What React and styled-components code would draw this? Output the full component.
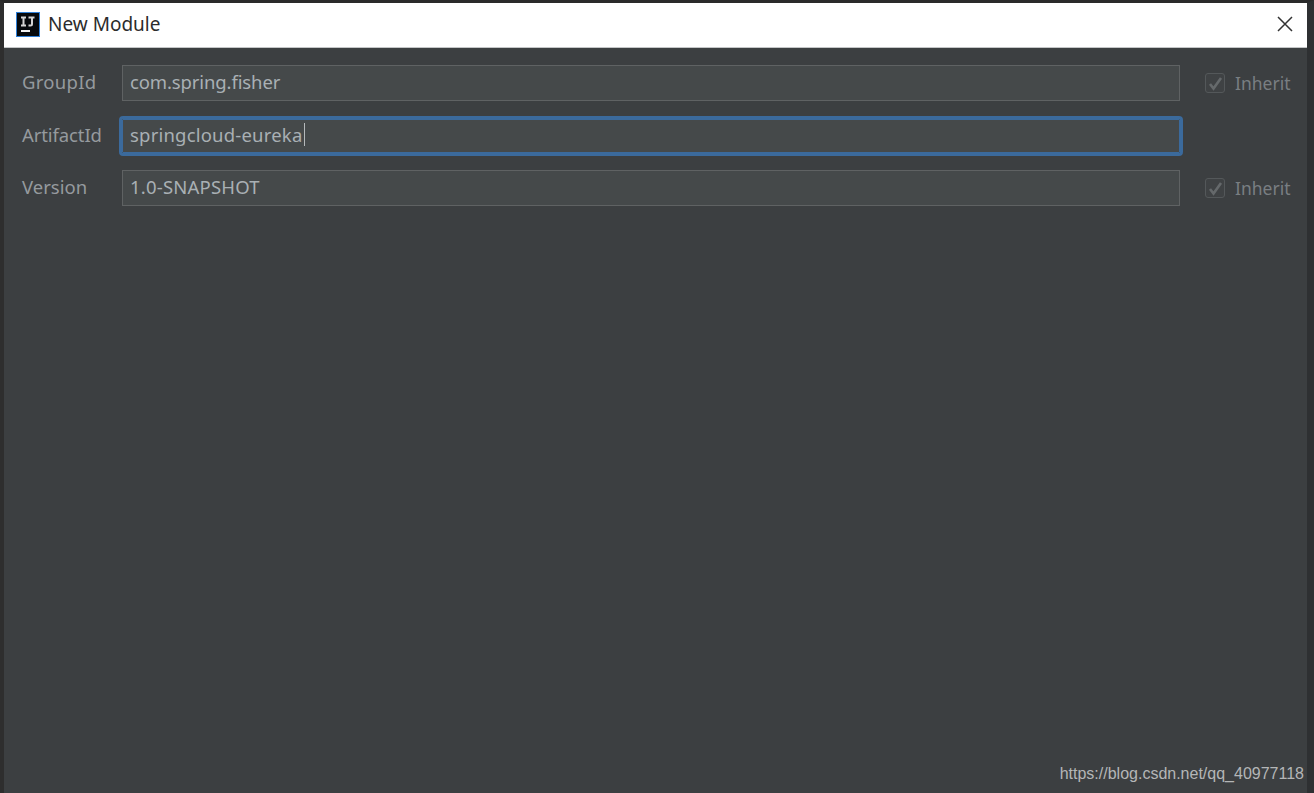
import React from 'react'
import styled, { createGlobalStyle } from 'styled-components'

const GlobalStyle = createGlobalStyle`
    html, body {
        margin: 0;
        padding: 0;
        background: #2b2b2b;
    }
    * {
        box-sizing: border-box;
    }
`

const Frame = styled.div`
    position: relative;
    width: 1314px;
    height: 793px;
    overflow: hidden;
    display: flex;
    flex-direction: column;
    background: #3c3f41;
    border-top: 3px solid #2a2a2a;
    border-left: 4px solid #2e2e2e;
    border-right: 7px solid #2e3032;
    font-family: "Noto Sans", sans-serif;
`

const TitleBar = styled.div`
    height: 45px;
    flex: none;
    display: flex;
    align-items: center;
    background: #fff;
    padding: 0 13px 2px 12px;
    border-bottom: 1px solid #c4c6c7;
`

const Title = styled.span`
    margin-left: 8px;
    flex: 1;
    font-size: 19px;
    line-height: 24px;
    color: #2c2c2c;
`

const CloseButton = styled.button`
    width: 18px;
    height: 18px;
    padding: 0;
    border: none;
    background: none;
    display: flex;
`

const Form = styled.div`
    padding: 17px 18px 0 18px;
    display: grid;
    grid-template-columns: 100px 1058px auto;
    grid-auto-rows: 36px;
    row-gap: 16.5px;
    align-items: center;
`

const Label = styled.label`
    font-size: 18.5px;
    line-height: 32px;
    padding-bottom: 2px;
    letter-spacing: ${p => p.$tracking || 0}px;
    color: #959a9e;
`

const Input = styled.div`
    height: ${p => (p.$focused ? '34px' : '36px')};
    display: flex;
    align-items: center;
    padding: 0 0 4px 7px;
    background: #45494a;
    border: 1px solid #5f6263;
    font-size: 18.5px;
    letter-spacing: ${p => p.$tracking || 0}px;
    color: #a9b0b4;
    ${p => p.$focused && `
        padding-bottom: 3px;
        border-color: #3b6a9c;
        outline: 3px solid #3b6a9c;
        border-radius: 1px;
    `}
`

const Caret = styled.span`
    display: inline-block;
    width: 1px;
    height: 23px;
    margin-left: 1px;
    background: #b5b9bb;
`

const Inherit = styled.div`
    display: flex;
    align-items: center;
    gap: 10px;
    padding-left: 25px;
    font-size: 17.5px;
    color: #797e82;
`

const CheckBox = styled.span`
    width: 20px;
    height: 20px;
    display: flex;
    align-items: center;
    justify-content: center;
    border: 1px solid #54585a;
    border-radius: 3px;
    background: #3f4244;
`

const Watermark = styled.div`
    position: absolute;
    right: 3px;
    bottom: 10px;
    font-family: "Liberation Sans", Arial, sans-serif;
    font-size: 16px;
    color: #b4b6b7;
`

function AppIcon() {
    return (
        <svg width="24" height="25" viewBox="0 0 24 25">
            <rect x="0.5" y="0.5" width="23" height="24" fill="#06090c" stroke="#2f7fd6" />
            <path d="M5 5.5h5M7.5 5.5v8M5 13.5h5M12.5 5.5h6M16 5.5v6.5q0 1.5-1.5 1.5h-2" fill="none" stroke="#d4d4d4" strokeWidth="2" />
            <rect x="5" y="18" width="9" height="2" fill="#f0f0f0" />
        </svg>
    )
}

function Check() {
    return (
        <svg width="15" height="15" viewBox="0 0 15 15">
            <path d="M2 8l3.5 4.5L13 2" fill="none" stroke="#65696b" strokeWidth="2.6" />
        </svg>
    )
}

const rows = [
    { label: 'GroupId', value: 'com.spring.fisher', inherit: true, labelTracking: 0.3, tracking: -0.12 },
    { label: 'ArtifactId', value: 'springcloud-eureka', focused: true, labelTracking: -0.1, tracking: 0.2 },
    { label: 'Version', value: '1.0-SNAPSHOT', inherit: true, labelTracking: 0, tracking: 0.2 },
]

export default function App() {
    return (
        <Frame>
            <GlobalStyle />
            <TitleBar>
                <AppIcon />
                <Title>New Module</Title>
                <CloseButton>
                    <svg width="18" height="18" viewBox="0 0 18 18">
                        <path d="M2 2l14 14M16 2L2 16" stroke="#333" strokeWidth="1.5" />
                    </svg>
                </CloseButton>
            </TitleBar>
            <Form>
                {rows.map(row => (
                    <React.Fragment key={row.label}>
                        <Label $tracking={row.labelTracking}>{row.label}</Label>
                        <Input $focused={row.focused} $tracking={row.tracking}>
                            {row.value}
                            {row.focused && <Caret />}
                        </Input>
                        {row.inherit ? (
                            <Inherit>
                                <CheckBox><Check /></CheckBox>
                                Inherit
                            </Inherit>
                        ) : <span />}
                    </React.Fragment>
                ))}
            </Form>
            <Watermark>https://blog.csdn.net/qq_40977118</Watermark>
        </Frame>
    )
}
